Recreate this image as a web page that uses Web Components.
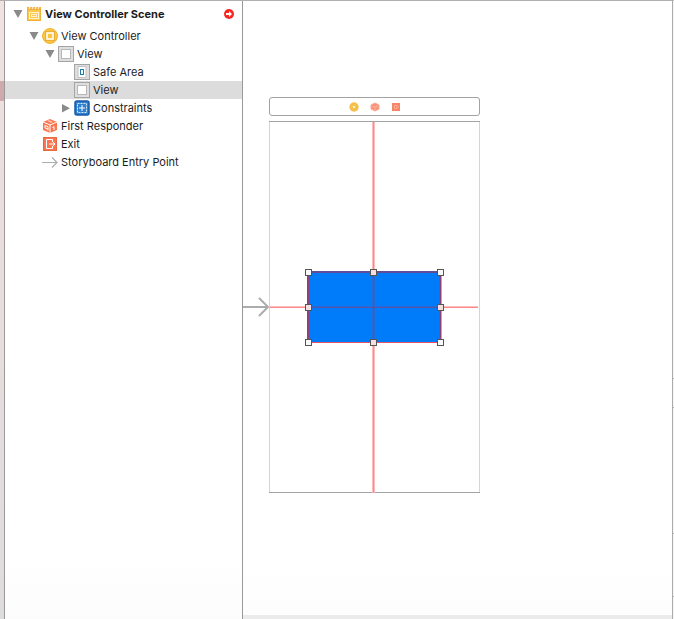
<!DOCTYPE html>
<html lang="en">
<head>
<meta charset="utf-8">
<title>Storyboard</title>
<style>
html, body { height: 100%; margin: 0; }
body { font: 11px/18px Inter, "Liberation Sans", sans-serif; color: #1c1c1c; background: #fff; }
</style>
</head>
<body>
<ib-window></ib-window>
<script>
const ICONS = {
  scene: '<rect x="1" y="3" width="14" height="12" fill="#fdc94c"/><path d="M1.5 3.500V14.500H14.500V3.500Z" fill="none" stroke="#f0b03a"/><path d="M1 1h14v3H1z" fill="#f3b03a"/><path d="M4 1l-1 2M7 1L6 3M10 1L9 3M13 1l-1 2" stroke="#fff" stroke-width="1"/><rect x="3.500" y="6.500" width="9" height="6" fill="none" stroke="#fff3d0"/><rect x="5.500" y="8.500" width="5" height="2" fill="none" stroke="#fff3d0"/>',
  controller: '<circle cx="8" cy="8" r="7.500" fill="#fcc540" stroke="#eeb33c"/><rect x="3.500" y="3.500" width="9" height="9" fill="none" stroke="#e7ae3c"/><rect x="5" y="5" width="6" height="6" fill="#fcc540" stroke="#fff" stroke-width="1.500"/>',
  view: '<rect x=".5" y=".5" width="15" height="15" fill="#dedede" stroke="#a4a4a4"/><rect x="3.500" y="3.500" width="9" height="9" fill="#fff" stroke="#b7b7b7"/>',
  safe: '<rect x=".5" y=".5" width="15" height="15" fill="#dedede" stroke="#a4a4a4"/><rect x="4" y="2.500" width="8" height="11" fill="#fff" stroke="#c2c2c2"/><rect x="6.500" y="5.500" width="3" height="5" fill="#fff" stroke="#1a7fae"/>',
  constraints: '<rect x="1" y="1" width="14" height="14" rx="2" fill="#2f80cf" stroke="#1959ab" stroke-width="1.500"/><rect x="3.500" y="3.500" width="9" height="9" fill="none" stroke="#d9ecff" stroke-dasharray="2 1"/><path d="M8 5v6M5 8h6" stroke="#fff"/>',
  responder: '<path d="M1 4L8 1l7 3v8l-7 3-7-3z" fill="#fb7650"/><path d="M1 4l7 3 7-3M8 7v8" fill="none" stroke="#fff"/><path d="M5 3l2-1 4 2-2 1z" fill="#fff" opacity=".5"/><path d="M3 7.500l3 1.200v3.800M3 7.500v2.500l3 1.200M10.500 9.500l1.500-1V12" fill="none" stroke="#fff"/>',
  exit: '<rect x="1" y="1" width="14" height="14" fill="#f97650"/><path d="M1.500 1.500h13v13h-13z" fill="none" stroke="#e8683f"/><path d="M10.500 6V3.500h-6v9h6V10M7 8h6M11 6l2 2-2 2" fill="none" stroke="#fff"/>',
  entry: '<path d="M0 8.500H15M10 3.500l5 5-5 5" fill="none" stroke="#aeaeae" stroke-width="1.200"/>'
};
function build(host, html) {
  const t = document.createElement('template');
  t.innerHTML = html;
  host.attachShadow({ mode: 'open' }).append(t.content.cloneNode(true));
}
customElements.define('ib-icon', class extends HTMLElement {
  connectedCallback() {
    if (this.shadowRoot) return;
    build(this, `<style>:host{display:block;width:16px;height:16px;flex:none}svg{display:block;width:100%;height:100%}</style><svg viewBox="0 0 16 16" aria-hidden="true">${ICONS[this.getAttribute('name')]}</svg>`);
  }
});
customElements.define('ib-row', class extends HTMLElement {
  connectedCallback() {
    if (this.shadowRoot) return;
    const state = this.getAttribute('toggle');
    const shape = state === 'open' ? 'M.5 1H9.500L5 9Z' : 'M1 1V9.500L9 5.200Z';
    const toggle = state ? `<button aria-label="Toggle children" aria-expanded="${state === 'open'}"><svg viewBox="0 0 10 10"><path d="${shape}" fill="#8a8a8a"/></svg></button>` : '';
    this.setAttribute('role', 'treeitem');
    build(this, `<style>
      :host{display:flex;align-items:center;height:18px;padding-right:8px;padding-left:calc(8px + 16px * var(--level,0));white-space:nowrap}
      :host([selected]){background:#dcdcdc}
      :host([heading]){height:26px;font-weight:700}
      :host([level="1"]){--level:1}:host([level="2"]){--level:2}:host([level="3"]){--level:3}
      .toggle{width:10px;height:10px;flex:none;margin-right:3px}
      button{display:block;width:10px;height:10px;padding:0;border:0;background:none}
      svg{display:block;width:10px;height:10px}
      .label{flex:1;margin-left:3px}
    </style><span class="toggle">${toggle}</span><ib-icon name="${this.getAttribute('icon')}"></ib-icon><span class="label"><slot></slot></span><slot name="status"></slot>`);
  }
});
customElements.define('ib-issue', class extends HTMLElement {
  connectedCallback() {
    if (this.shadowRoot) return;
    build(this, `<style>:host{display:block}button{display:block;width:10px;height:10px;padding:0;border:0;background:none}svg{display:block}</style>
    <button aria-label="Show layout issues"><svg width="10" height="10" viewBox="0 0 10 10"><circle cx="5" cy="5" r="5" fill="#fb2620"/><path d="M2 4h3V2l3 3-3 3V6H2z" fill="#fff"/></svg></button>`);
  }
});
customElements.define('ib-outline', class extends HTMLElement {
  connectedCallback() {
    if (this.shadowRoot) return;
    build(this, `<style>:host{display:block;background:linear-gradient(#fff 90%,#fcfcfc)}</style>
    <div role="tree" aria-label="Document outline">
      <ib-row heading icon="scene" toggle="open">View Controller Scene<ib-issue slot="status"></ib-issue></ib-row>
      <ib-row level="1" icon="controller" toggle="open">View Controller</ib-row>
      <ib-row level="2" icon="view" toggle="open">View</ib-row>
      <ib-row level="3" icon="safe">Safe Area</ib-row>
      <ib-row level="3" icon="view" selected>View</ib-row>
      <ib-row level="3" icon="constraints" toggle="closed">Constraints</ib-row>
      <ib-row level="1" icon="responder">First Responder</ib-row>
      <ib-row level="1" icon="exit">Exit</ib-row>
      <ib-row level="1" icon="entry">Storyboard Entry Point</ib-row>
    </div>`);
  }
});
customElements.define('ib-dock', class extends HTMLElement {
  connectedCallback() {
    if (this.shadowRoot) return;
    build(this, `<style>
      :host{display:flex;justify-content:center;align-items:center;gap:11px;height:19px;box-sizing:border-box;border:1px solid #a2a2a2;border-radius:3px;background:#fff}
      button{display:block;width:10px;height:10px;padding:0;border:0;background:none}svg{display:block}
    </style>
    <button aria-label="View Controller"><svg width="10" height="10"><circle cx="5" cy="5" r="4.700" fill="#f6c04b"/><rect x="4" y="4" width="2" height="2" fill="#fff3d0"/></svg></button>
    <button aria-label="First Responder"><svg width="10" height="10"><path d="M1 3l4-2 4 2v4L5 9 1 7z" fill="#fa9478" stroke="#fba78f" stroke-linejoin="round"/><path d="M2 4l3 1 3-1M5 5v3" fill="none" stroke="#fbb09c"/></svg></button>
    <button aria-label="Exit"><svg width="10" height="10"><rect x="1" y="1" width="8" height="8" fill="#fa8466"/><path d="M6.500 3.500h-3v3h3M5 5h3" fill="none" stroke="#fbad98"/></svg></button>`);
  }
});
customElements.define('ib-device', class extends HTMLElement {
  connectedCallback() {
    if (this.shadowRoot) return;
    const handles = [39, 104, 171].flatMap(x => [151, 186, 221].filter(y => x !== 104 || y !== 186).map(y =>
      `<rect x="${x - 2.5}" y="${y - 2.5}" width="6" height="6" fill="${x === 104 || y === 186 ? '#f3dfe2' : '#fafafa'}" stroke="#555"/>`)).join('');
    build(this, `<style>:host{display:block}svg{display:block;width:100%}</style>
    <svg viewBox="0 0 211 372" role="img" aria-label="Centred view with its constraints">
      <path d="M.5 0V372M210.500 0V372" stroke="#d5d5d5"/><path d="M0 .5H211M0 371.500H211" stroke="#a3a3a3"/>
      <g fill="#ffbcbc"><rect x="103" y="1" width="3" height="371"/><rect x="1" y="185" width="208" height="2"/></g>
      <g fill="#f98a8a"><rect x="104" y="1" width="1" height="371"/><rect x="1" y="186" width="208" height="1"/></g>
      <rect x="39" y="151" width="132" height="70" fill="#007bf9"/>
      <path d="M103 151h3v70h-3zM39 185h132v2H39z" fill="#2a6ad4"/>
      <path d="M104.500 151V221M39 186.500H171" stroke="#5a52a8"/>
      <path d="M39 151H172" stroke="#624c99" stroke-width="2"/>
      <path d="M39 151V221M171.500 151V221" stroke="#914073" stroke-width="2"/>
      <path d="M39 221.500H172" stroke="#e15262"/>
      ${handles}
    </svg>`);
  }
});
customElements.define('ib-canvas', class extends HTMLElement {
  connectedCallback() {
    if (this.shadowRoot) return;
    build(this, `<style>
      :host{display:flex;flex-direction:column;overflow:hidden;background:#fff}
      .space{flex:1;position:relative;background:linear-gradient(#fff 90%,#fdfdfd)}
      .scene{position:absolute;left:26px;top:96px;width:211px;display:grid;gap:5px}
      .entry{position:absolute;left:-26px;top:200px}
      .footer{height:4px;background:#ebebeb}
    </style>
    <div class="space"><div class="scene">
      <ib-dock></ib-dock><ib-device></ib-device>
      <svg class="entry" width="27" height="20" aria-hidden="true"><path d="M0 10H25M16 1l9 9-9 9" fill="none" stroke="#acacac" stroke-width="2"/></svg>
    </div></div><div class="footer"></div>`);
  }
});
customElements.define('ib-window', class extends HTMLElement {
  connectedCallback() {
    build(this, `<style>
      :host{display:grid;grid-template-columns:4px minmax(180px,239px) 1fr 2px;min-height:100%;box-sizing:border-box;border-top:1px solid #b0b0b0}
      .navigator{display:grid;grid-template-rows:80px 20px 1fr;background:linear-gradient(#f2e2e2,#e9dddd 40%,#dfdcdc)}
      .navigator i{grid-row:2;background:#cfaaad}
      ib-outline{border:1px solid #999;border-width:0 1px}
      .inspector{border-left:1px solid #ababab;display:grid;grid-template-rows:377px 1px 28px 1px 125px 1px 62px 1px 1fr;background:#f7f7f7}
      .inspector i{background:#aaa}
    </style>
    <div class="navigator"><i></i></div><ib-outline></ib-outline><ib-canvas></ib-canvas>
    <div class="inspector"><b></b><i></i><b></b><i></i><b></b><i></i><b></b><i></i><b></b></div>`);
  }
});
</script>
</body>
</html>
